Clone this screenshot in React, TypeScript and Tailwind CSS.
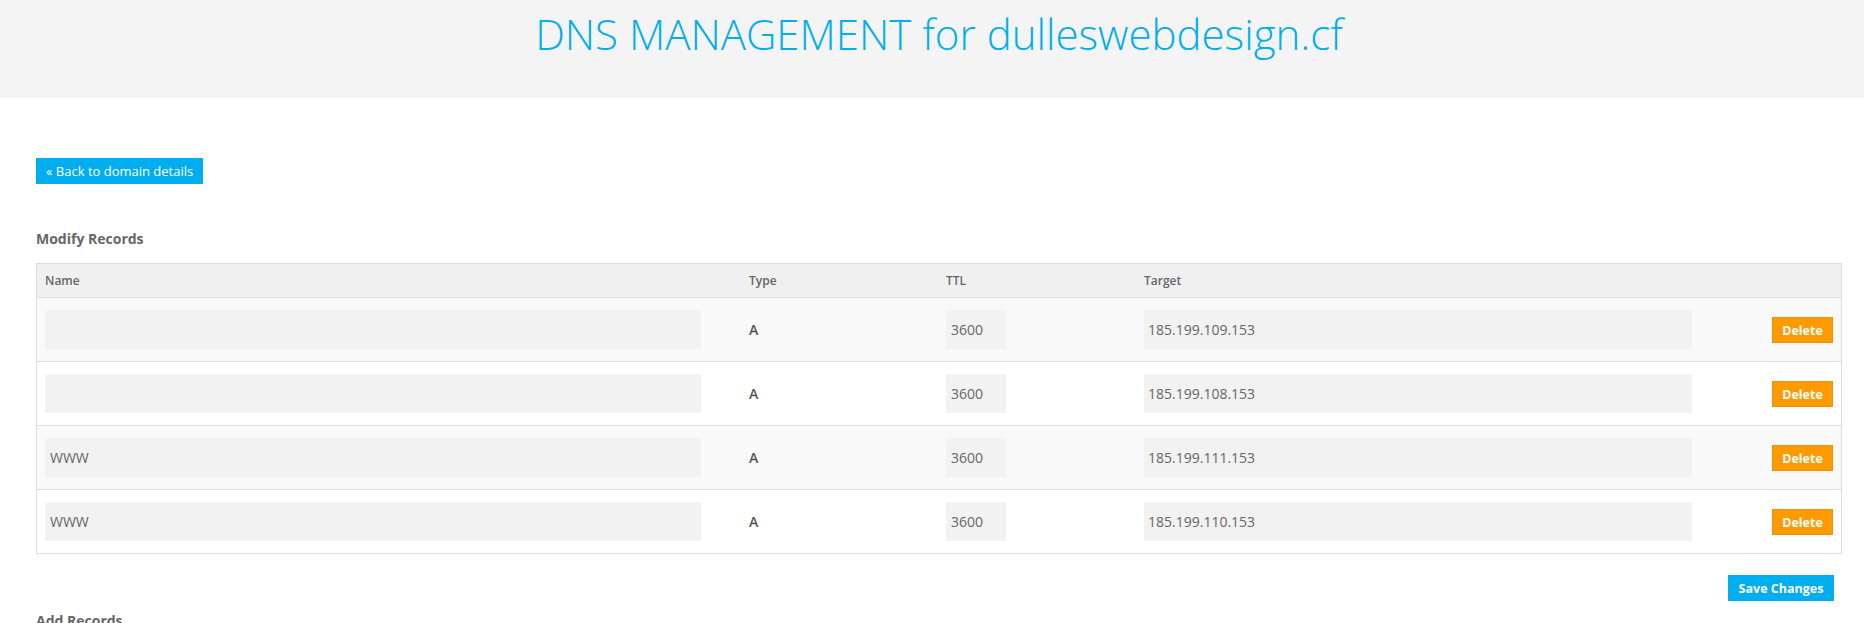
const records = [
  { name: "", type: "A", ttl: "3600", target: "185.199.109.153" },
  { name: "", type: "A", ttl: "3600", target: "185.199.108.153" },
  { name: "WWW", type: "A", ttl: "3600", target: "185.199.111.153" },
  { name: "WWW", type: "A", ttl: "3600", target: "185.199.110.153" },
];

const cols = "grid grid-cols-[704px_197px_198px_564px_1fr]";

const App = () => {
  return (
    <div className="min-h-screen bg-white font-['Open_Sans',sans-serif] text-[#555]">
      <div className="h-[98px] bg-[#f4f4f4] pl-[36px] pr-[22px] pt-[5px]">
        <h1 className="text-center text-[42px] font-light leading-[58px] text-[#00aeef]">
          DNS MANAGEMENT for dulleswebdesign.cf
        </h1>
      </div>

      <div className="pl-[36px] pr-[22px]">
        <button className="mt-[60px] h-[26px] bg-[#00aeef] px-[10px] text-[13px] leading-[26px] text-white">
          « Back to domain details
        </button>

        <h3 className="mt-[45px] text-[14px] font-bold leading-[20px] text-[#666]">
          Modify Records
        </h3>

        <div className="mt-[14px] border border-[#dddddd]">
          <div className={`${cols} h-[34px] items-center border-b border-[#dddddd] bg-[#f0f0f0] text-[12px] font-semibold text-[#666]`}>
            <div className="pl-[8px]">Name</div>
            <div className="pl-[8px]">Type</div>
            <div className="pl-[8px]">TTL</div>
            <div className="pl-[8px]">Target</div>
            <div></div>
          </div>
          {records.map((r, i) => (
            <div
              key={i}
              className={`${cols} items-center py-[12px] ${i % 2 === 0 ? "bg-[#f9f9f9]" : "bg-white"} ${i < records.length - 1 ? "border-b border-[#dddddd]" : ""}`}
            >
              <div className="pl-[8px]">
                <input
                  type="text"
                  defaultValue={r.name}
                  className="h-[39px] w-[656px] bg-[#f2f2f2] pl-[5px] text-[14px] text-[#666] outline-none"
                />
              </div>
              <div className="pl-[8px] text-[14px] font-semibold text-[#555]">{r.type}</div>
              <div className="pl-[8px]">
                <input
                  type="text"
                  defaultValue={r.ttl}
                  className="h-[39px] w-[60px] bg-[#f2f2f2] pl-[5px] text-[14px] text-[#666] outline-none"
                />
              </div>
              <div className="pl-[8px]">
                <input
                  type="text"
                  defaultValue={r.target}
                  className="h-[39px] w-[548px] bg-[#f2f2f2] pl-[4px] text-[14px] text-[#666] outline-none"
                />
              </div>
              <div className="flex justify-end pr-[8px]">
                <button className="flex h-[26px] w-[61px] items-center justify-center border border-[#f39200] bg-[#ff9900] pt-[2px] text-[12.5px] font-bold leading-[20px] text-white">
                  Delete
                </button>
              </div>
            </div>
          ))}
        </div>

        <div className="mt-[21px] flex justify-end pr-[8px]">
          <button className="flex h-[26px] w-[106px] items-center justify-center bg-[#00aeef] pt-[1px] text-[12.5px] font-bold leading-[20px] text-white">
            Save Changes
          </button>
        </div>

        <h3 className="mt-[10px] text-[14px] font-bold leading-[20px] text-[#666]">
          Add Records
        </h3>
      </div>
    </div>
  );
};

export default App;
